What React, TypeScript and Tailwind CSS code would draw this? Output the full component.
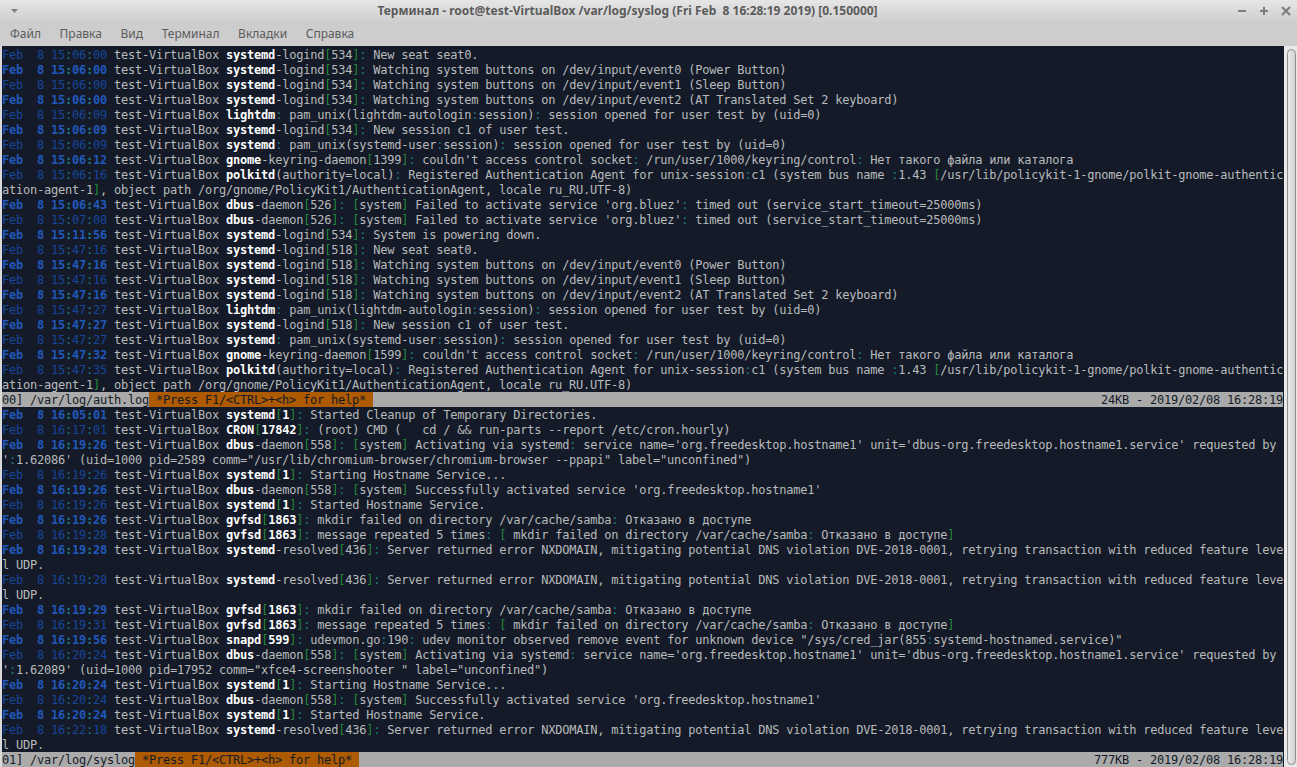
const AUTH_LOG = [
  "Feb  8 15:06:00 test-VirtualBox systemd-logind[534]: New seat seat0.",
  "Feb  8 15:06:00 test-VirtualBox systemd-logind[534]: Watching system buttons on /dev/input/event0 (Power Button)",
  "Feb  8 15:06:00 test-VirtualBox systemd-logind[534]: Watching system buttons on /dev/input/event1 (Sleep Button)",
  "Feb  8 15:06:00 test-VirtualBox systemd-logind[534]: Watching system buttons on /dev/input/event2 (AT Translated Set 2 keyboard)",
  "Feb  8 15:06:09 test-VirtualBox lightdm: pam_unix(lightdm-autologin:session): session opened for user test by (uid=0)",
  "Feb  8 15:06:09 test-VirtualBox systemd-logind[534]: New session c1 of user test.",
  "Feb  8 15:06:09 test-VirtualBox systemd: pam_unix(systemd-user:session): session opened for user test by (uid=0)",
  "Feb  8 15:06:12 test-VirtualBox gnome-keyring-daemon[1399]: couldn't access control socket: /run/user/1000/keyring/control: Нет такого файла или каталога",
  "Feb  8 15:06:16 test-VirtualBox polkitd(authority=local): Registered Authentication Agent for unix-session:c1 (system bus name :1.43 [/usr/lib/policykit-1-gnome/polkit-gnome-authentic",
  "ation-agent-1], object path /org/gnome/PolicyKit1/AuthenticationAgent, locale ru_RU.UTF-8)",
  "Feb  8 15:06:43 test-VirtualBox dbus-daemon[526]: [system] Failed to activate service 'org.bluez': timed out (service_start_timeout=25000ms)",
  "Feb  8 15:07:08 test-VirtualBox dbus-daemon[526]: [system] Failed to activate service 'org.bluez': timed out (service_start_timeout=25000ms)",
  "Feb  8 15:11:56 test-VirtualBox systemd-logind[534]: System is powering down.",
  "Feb  8 15:47:16 test-VirtualBox systemd-logind[518]: New seat seat0.",
  "Feb  8 15:47:16 test-VirtualBox systemd-logind[518]: Watching system buttons on /dev/input/event0 (Power Button)",
  "Feb  8 15:47:16 test-VirtualBox systemd-logind[518]: Watching system buttons on /dev/input/event1 (Sleep Button)",
  "Feb  8 15:47:16 test-VirtualBox systemd-logind[518]: Watching system buttons on /dev/input/event2 (AT Translated Set 2 keyboard)",
  "Feb  8 15:47:27 test-VirtualBox lightdm: pam_unix(lightdm-autologin:session): session opened for user test by (uid=0)",
  "Feb  8 15:47:27 test-VirtualBox systemd-logind[518]: New session c1 of user test.",
  "Feb  8 15:47:27 test-VirtualBox systemd: pam_unix(systemd-user:session): session opened for user test by (uid=0)",
  "Feb  8 15:47:32 test-VirtualBox gnome-keyring-daemon[1599]: couldn't access control socket: /run/user/1000/keyring/control: Нет такого файла или каталога",
  "Feb  8 15:47:35 test-VirtualBox polkitd(authority=local): Registered Authentication Agent for unix-session:c1 (system bus name :1.43 [/usr/lib/policykit-1-gnome/polkit-gnome-authentic",
  "ation-agent-1], object path /org/gnome/PolicyKit1/AuthenticationAgent, locale ru_RU.UTF-8)",
];

const SYSLOG = [
  "Feb  8 16:05:01 test-VirtualBox systemd[1]: Started Cleanup of Temporary Directories.",
  "Feb  8 16:17:01 test-VirtualBox CRON[17842]: (root) CMD (   cd / && run-parts --report /etc/cron.hourly)",
  "Feb  8 16:19:26 test-VirtualBox dbus-daemon[558]: [system] Activating via systemd: service name='org.freedesktop.hostname1' unit='dbus-org.freedesktop.hostname1.service' requested by",
  "':1.62086' (uid=1000 pid=2589 comm=\"/usr/lib/chromium-browser/chromium-browser --ppapi\" label=\"unconfined\")",
  "Feb  8 16:19:26 test-VirtualBox systemd[1]: Starting Hostname Service...",
  "Feb  8 16:19:26 test-VirtualBox dbus-daemon[558]: [system] Successfully activated service 'org.freedesktop.hostname1'",
  "Feb  8 16:19:26 test-VirtualBox systemd[1]: Started Hostname Service.",
  "Feb  8 16:19:26 test-VirtualBox gvfsd[1863]: mkdir failed on directory /var/cache/samba: Отказано в доступе",
  "Feb  8 16:19:28 test-VirtualBox gvfsd[1863]: message repeated 5 times: [ mkdir failed on directory /var/cache/samba: Отказано в доступе]",
  "Feb  8 16:19:28 test-VirtualBox systemd-resolved[436]: Server returned error NXDOMAIN, mitigating potential DNS violation DVE-2018-0001, retrying transaction with reduced feature leve",
  "l UDP.",
  "Feb  8 16:19:28 test-VirtualBox systemd-resolved[436]: Server returned error NXDOMAIN, mitigating potential DNS violation DVE-2018-0001, retrying transaction with reduced feature leve",
  "l UDP.",
  "Feb  8 16:19:29 test-VirtualBox gvfsd[1863]: mkdir failed on directory /var/cache/samba: Отказано в доступе",
  "Feb  8 16:19:31 test-VirtualBox gvfsd[1863]: message repeated 5 times: [ mkdir failed on directory /var/cache/samba: Отказано в доступе]",
  "Feb  8 16:19:56 test-VirtualBox snapd[599]: udevmon.go:190: udev monitor observed remove event for unknown device \"/sys/cred_jar(855:systemd-hostnamed.service)\"",
  "Feb  8 16:20:24 test-VirtualBox dbus-daemon[558]: [system] Activating via systemd: service name='org.freedesktop.hostname1' unit='dbus-org.freedesktop.hostname1.service' requested by",
  "':1.62089' (uid=1000 pid=17952 comm=\"xfce4-screenshooter \" label=\"unconfined\")",
  "Feb  8 16:20:24 test-VirtualBox systemd[1]: Starting Hostname Service...",
  "Feb  8 16:20:24 test-VirtualBox dbus-daemon[558]: [system] Successfully activated service 'org.freedesktop.hostname1'",
  "Feb  8 16:20:24 test-VirtualBox systemd[1]: Started Hostname Service.",
  "Feb  8 16:22:18 test-VirtualBox systemd-resolved[436]: Server returned error NXDOMAIN, mitigating potential DNS violation DVE-2018-0001, retrying transaction with reduced feature leve",
  "l UDP.",
];

const MENU = ["Файл", "Правка", "Вид", "Терминал", "Вкладки", "Справка"];

// colons go teal, brackets go green, everything else keeps the line colour
function Message({ text }: { text: string }) {
  const parts = text.split(/([:\[\]])/);
  return (
    <>
      {parts.map((part, i) =>
        part === ":" ? (
          <span key={i} className="text-[#1f7f86]">:</span>
        ) : part === "[" || part === "]" ? (
          <span key={i} className="text-[#23883a]">{part}</span>
        ) : (
          part
        )
      )}
    </>
  );
}

function Row({ line, bright }: { line: string; bright: boolean }) {
  const m = line.match(/^(Feb  8 )(\d\d):(\d\d):(\d\d)( test-VirtualBox )([A-Za-z]+)(.*)$/);
  if (!m) {
    return (
      <div className="h-[15px] whitespace-pre">
        <Message text={line} />
      </div>
    );
  }
  const [, date, hh, mm, ss, host, proc, rest] = m;
  const pid = rest.match(/^\[(\d+)\](.*)$/);
  const dateColor = bright ? "font-bold text-[#2058bc]" : "text-[#17459c]";
  return (
    <div className="h-[15px] whitespace-pre">
      <span className={dateColor}>
        {date}
        {hh}
        <span className="text-[#1f7f86]">:</span>
        {mm}
        <span className="text-[#1f7f86]">:</span>
        {ss}
      </span>
      {host}
      <span className="font-bold text-white">{proc}</span>
      {pid ? (
        <>
          <span className="text-[#23883a]">[</span>
          <span className="font-bold text-white">{pid[1]}</span>
          <span className="text-[#23883a]">]</span>
          <Message text={pid[2]} />
        </>
      ) : (
        <Message text={rest} />
      )}
    </div>
  );
}

function Pane({ lines, firstBright }: { lines: string[]; firstBright: boolean }) {
  let bright = !firstBright;
  return (
    <div>
      {lines.map((line, i) => {
        if (line.startsWith("Feb")) bright = !bright;
        return <Row key={i} line={line} bright={bright} />;
      })}
    </div>
  );
}

function StatusBar({ name, size }: { name: string; size: string }) {
  return (
    <div className="flex h-[15px] w-[1281px] justify-between whitespace-pre bg-[#aaaaaa] text-[#141a28]">
      <div className="flex">
        <span>{name}</span>
        <span className="bg-[#ad5a00]">{" *Press F1/<CTRL>+<h> for help* "}</span>
      </div>
      <span>{size} - 2019/02/08 16:28:19</span>
    </div>
  );
}

function WindowButtons() {
  return (
    <div className="flex items-center gap-[10px] text-[#7d7d7d]">
      <svg width="12" height="12" viewBox="0 0 12 12" fill="currentColor" aria-hidden>
        <rect x="2" y="5" width="8" height="2" />
      </svg>
      <svg width="12" height="12" viewBox="0 0 12 12" fill="currentColor" aria-hidden>
        <rect x="2" y="5" width="8" height="2" />
        <rect x="5" y="2" width="2" height="8" />
      </svg>
      <svg width="12" height="12" viewBox="0 0 12 12" fill="none" stroke="currentColor" strokeWidth="2" aria-hidden>
        <path d="M2 2l8 8M10 2l-8 8" />
      </svg>
    </div>
  );
}

export default function App() {
  return (
    <div className="flex h-[767px] w-[1297px] flex-col overflow-hidden bg-[#e6e6e6]">
      <div className="h-[46px] shrink-0 bg-gradient-to-b from-[#e6e6e6] from-0% to-[#cdcdcd] to-50% font-['Noto_Sans',sans-serif]">
        <div className="flex h-[21px] items-center justify-between pl-[10px] pr-[5px]">
          <svg width="9" height="6" viewBox="0 0 9 6" fill="#808080" aria-hidden>
            <path d="M1 1h7L4.500 5z" />
          </svg>
          <div className="whitespace-pre text-[12px] font-bold text-[#5b5b5b]">
            Терминал - root@test-VirtualBox /var/log/syslog (Fri Feb  8 16:28:19 2019) [0.150000]
          </div>
          <WindowButtons />
        </div>
        <div className="flex h-[25px] items-center gap-[18.6px] pl-[10px] text-[12px] text-[#5c5c5c]">
          {MENU.map((item) => (
            <span key={item}>{item}</span>
          ))}
        </div>
      </div>
      <div className="flex min-h-0 flex-1">
        <div className="w-[2px] shrink-0 bg-[#d9d9d9]" />
        <div className="w-[1282px] shrink-0 bg-[#141a28] pt-px font-['DejaVu_Sans_Mono',monospace] text-[12px] leading-[17px] tracking-[-0.224px] text-[#b8babc]">
          <Pane lines={AUTH_LOG} firstBright={false} />
          <StatusBar name="00] /var/log/auth.log" size="24KB" />
          <Pane lines={SYSLOG} firstBright />
          <StatusBar name="01] /var/log/syslog" size="777KB" />
        </div>
        <div className="flex-1 bg-[#e9e9e9] pb-[2px] pl-[3px] pr-px pt-[3px]">
          <div className="h-full rounded-full border border-[#8f8f8f] bg-gradient-to-r from-[#ececec] to-[#d2d2d2]" />
        </div>
      </div>
    </div>
  );
}
